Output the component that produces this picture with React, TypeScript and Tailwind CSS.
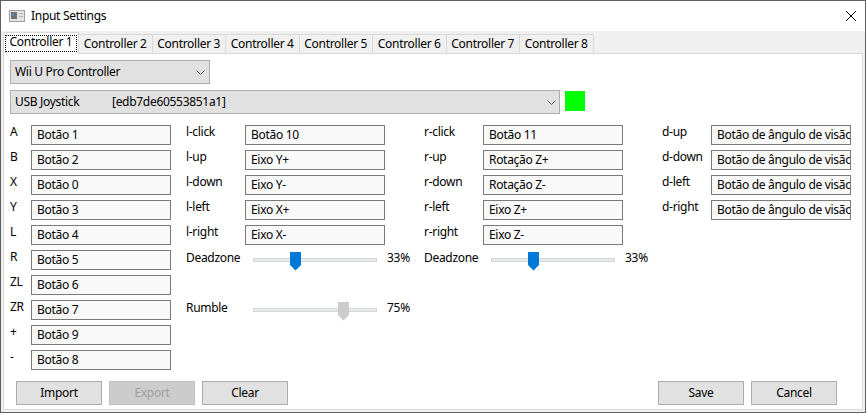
import React from 'react'

type Binding = { label: string; value: string }

const faceButtons: Binding[] = [
    { label: 'A', value: 'Botão 1' },
    { label: 'B', value: 'Botão 2' },
    { label: 'X', value: 'Botão 0' },
    { label: 'Y', value: 'Botão 3' },
    { label: 'L', value: 'Botão 4' },
    { label: 'R', value: 'Botão 5' },
    { label: 'ZL', value: 'Botão 6' },
    { label: 'ZR', value: 'Botão 7' },
    { label: '+', value: 'Botão 9' },
    { label: '-', value: 'Botão 8' },
]

const leftStick: Binding[] = [
    { label: 'l-click', value: 'Botão 10' },
    { label: 'l-up', value: 'Eixo Y+' },
    { label: 'l-down', value: 'Eixo Y-' },
    { label: 'l-left', value: 'Eixo X+' },
    { label: 'l-right', value: 'Eixo X-' },
]

const rightStick: Binding[] = [
    { label: 'r-click', value: 'Botão 11' },
    { label: 'r-up', value: 'Rotação Z+' },
    { label: 'r-down', value: 'Rotação Z-' },
    { label: 'r-left', value: 'Eixo Z+' },
    { label: 'r-right', value: 'Eixo Z-' },
]

const dpad: Binding[] = [
    { label: 'd-up', value: 'Botão de ângulo de visão' },
    { label: 'd-down', value: 'Botão de ângulo de visão' },
    { label: 'd-left', value: 'Botão de ângulo de visão' },
    { label: 'd-right', value: 'Botão de ângulo de visão' },
]

const tabs = ['Controller 1', 'Controller 2', 'Controller 3', 'Controller 4', 'Controller 5', 'Controller 6', 'Controller 7', 'Controller 8']

function Chevron() {
    return (
        <svg width="9" height="5" viewBox="0 0 9 5" className="shrink-0">
            <polyline points="0.5,0.5 4.5,4.5 8.5,0.5" fill="none" stroke="#606060" strokeWidth="1" />
        </svg>
    )
}

function MappingRow({ label, value, labelWidth }: Binding & { labelWidth: string }) {
    return (
        <div className="flex h-5 items-start">
            <span className={`${labelWidth} -mt-px shrink-0 leading-4 whitespace-nowrap`}>{label}</span>
            <div className="h-5 w-[140px] shrink-0 overflow-hidden border border-[#7a7a7a] bg-[#f9f9f9] pl-[5px] leading-[18px] whitespace-nowrap">
                {value}
            </div>
        </div>
    )
}

function Slider({ value, active }: { value: number; active: boolean }) {
    // thumb travels 113px along the 124px track
    const left = Math.round((value / 100) * 113)
    return (
        <div className="relative ml-2 h-5 w-[124px] shrink-0">
            <div className="mt-2 h-1 border border-[#d6d6d6] bg-[#e7eaea]" />
            <svg className="absolute top-[2px]" style={{ left }} width="11" height="19" viewBox="0 0 11 19">
                <polygon points="0,0 11,0 11,13 5.5,18.5 0,13" fill={active ? '#0078d7' : '#cccccc'} />
            </svg>
        </div>
    )
}

function SliderRow({ label, value, active }: { label: string; value: number; active: boolean }) {
    return (
        <div className="flex h-5 items-start">
            <span className="w-[59px] shrink-0 leading-4">{label}</span>
            <Slider value={value} active={active} />
            <span className="ml-[10px] leading-4">{value}%</span>
        </div>
    )
}

function DialogButton({ children, disabled }: { children: React.ReactNode; disabled?: boolean }) {
    return (
        <button
            type="button"
            disabled={disabled}
            className={`h-6 w-[86px] border text-center leading-[22px] ${disabled
                ? 'border-[#bfbfbf] bg-[#cccccc] text-[#a0a0a0]'
                : 'border-[#adadad] bg-[#e1e1e1] text-black'
                }`}
        >
            {children}
        </button>
    )
}

export default function App() {
    return (
        <div className="flex h-[413px] w-[866px] flex-col border border-[#5f5f5f] bg-[#f0f0f0] font-['Noto_Sans',sans-serif] text-[12px] tracking-[-0.3px] text-black">
            {/* title bar */}
            <div className="flex h-[30px] shrink-0 items-center bg-white pl-2 pr-[9px]">
                <svg width="16" height="12" viewBox="0 0 16 12" className="shrink-0">
                    <rect x="0.5" y="0.5" width="15" height="11" fill="#e4e4e4" stroke="#a0a0a0" />
                    <rect x="2" y="2" width="6" height="7" fill="#707070" />
                    <rect x="3" y="4" width="2" height="2" fill="#4a8ad8" />
                    <rect x="10" y="3" width="4" height="1" fill="#b0b0b0" />
                    <rect x="10" y="6" width="4" height="1" fill="#b0b0b0" />
                </svg>
                <span className="ml-[6px] leading-4">Input Settings</span>
                <svg width="10" height="10" viewBox="0 0 10 10" className="ml-auto">
                    <line x1="0" y1="0" x2="10" y2="10" stroke="#000" strokeWidth="1" />
                    <line x1="10" y1="0" x2="0" y2="10" stroke="#000" strokeWidth="1" />
                </svg>
            </div>

            <div className="flex flex-1 flex-col px-[2px] pb-[2px]">
                {/* tab strip */}
                <div className="flex h-[22px] shrink-0 items-start">
                    {tabs.map((tab, i) =>
                        i === 0 ? (
                            <div key={tab} className="relative z-10 mt-px h-[22px] w-[76px] shrink-0 border border-b-0 border-[#d9d9d9] bg-white px-px pt-[2px]">
                                <span className="block h-[17px] border border-dotted border-black text-center leading-3">{tab}</span>
                            </div>
                        ) : (
                            <div key={tab} className="-ml-px mt-[3px] h-[19px] w-[74.5px] shrink-0 border border-b-0 border-[#d9d9d9] bg-[#f0f0f0] pt-px text-center leading-4">
                                {tab}
                            </div>
                        )
                    )}
                </div>

                {/* tab page */}
                <div className="flex flex-1 flex-col border border-[#d9d9d9] bg-white pt-[6px] pl-[6px]">
                    <div className="flex h-6 w-[200px] items-center justify-between border border-[#adadad] bg-[#e1e1e1] pr-1 pl-1 leading-[22px]">
                        <span>Wii U Pro Controller</span>
                        <Chevron />
                    </div>

                    <div className="mt-[6px] flex items-start">
                        <div className="flex h-6 w-[550px] items-center border border-[#adadad] bg-[#e1e1e1] pr-[3px] pl-1 leading-[22px]">
                            <span className="w-[97px] shrink-0">USB Joystick</span>
                            <span>[edb7de60553851a1]</span>
                            <span className="ml-auto"><Chevron /></span>
                        </div>
                        <div className="mt-px ml-[5px] h-5 w-5 bg-[#00ff00]" />
                    </div>

                    {/* mapping columns */}
                    <div className="mt-[11px] flex items-start">
                        <div className="flex w-[161px] shrink-0 flex-col gap-[5px]">
                            {faceButtons.map(b => (
                                <MappingRow key={b.label} {...b} labelWidth="w-[21px]" />
                            ))}
                        </div>

                        <div className="ml-[15px] flex w-[199px] shrink-0 flex-col gap-[5px]">
                            {leftStick.map(b => (
                                <MappingRow key={b.label} {...b} labelWidth="w-[59px]" />
                            ))}
                            <SliderRow label="Deadzone" value={33} active />
                            <div className="h-5" />
                            <SliderRow label="Rumble" value={75} active={false} />
                        </div>

                        <div className="ml-[39px] flex w-[199px] shrink-0 flex-col gap-[5px]">
                            {rightStick.map(b => (
                                <MappingRow key={b.label} {...b} labelWidth="w-[59px]" />
                            ))}
                            <SliderRow label="Deadzone" value={33} active />
                        </div>

                        <div className="ml-[39px] flex w-[189px] shrink-0 flex-col gap-[5px]">
                            {dpad.map(b => (
                                <MappingRow key={b.label} {...b} labelWidth="w-[49px]" />
                            ))}
                        </div>
                    </div>

                    {/* dialog buttons */}
                    <div className="mt-[11px] flex items-center justify-between pr-[25px] pl-[6px]">
                        <div className="flex gap-[7px]">
                            <DialogButton>Import</DialogButton>
                            <DialogButton disabled>Export</DialogButton>
                            <DialogButton>Clear</DialogButton>
                        </div>
                        <div className="flex gap-[7px]">
                            <DialogButton>Save</DialogButton>
                            <DialogButton>Cancel</DialogButton>
                        </div>
                    </div>
                </div>
            </div>
        </div>
    )
}
